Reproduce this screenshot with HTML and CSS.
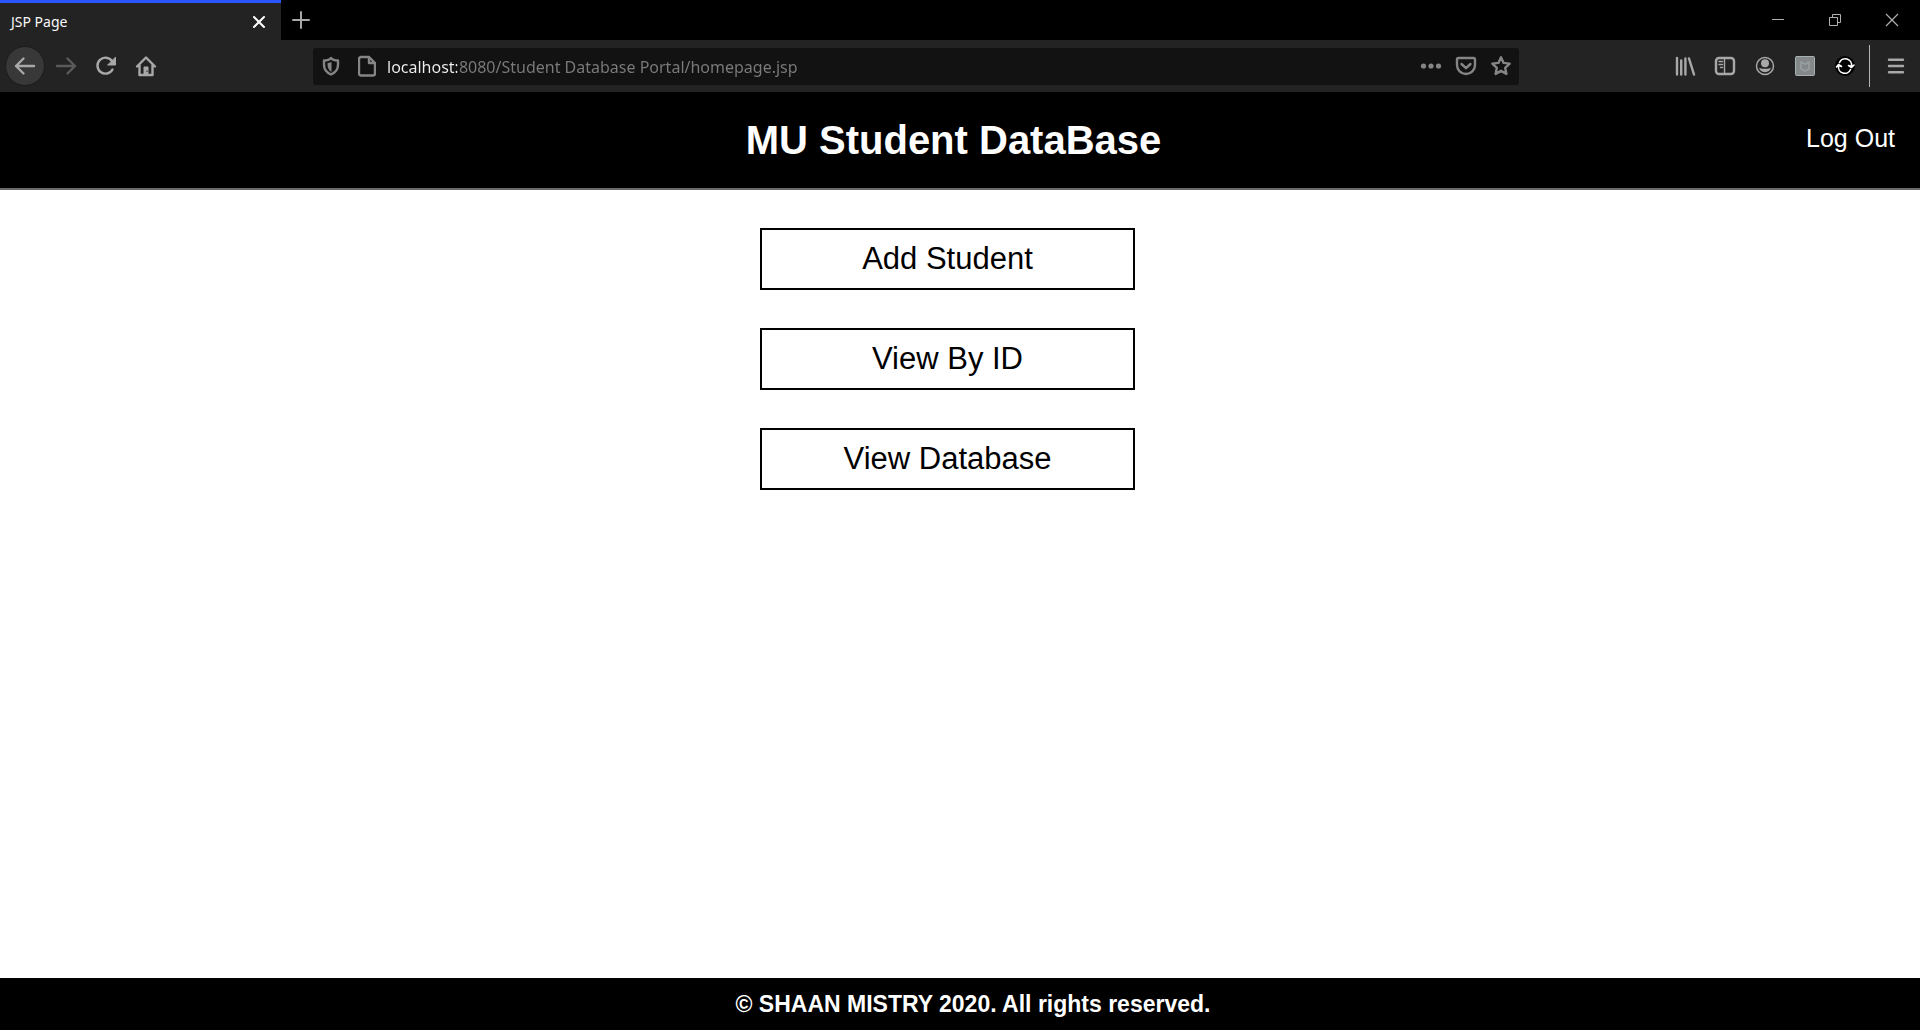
FILE: index.html
```html
<!DOCTYPE html>
<html lang="en">
<head>
<meta charset="utf-8">
<title>JSP Page</title>
<link rel="stylesheet" href="styles.css">
</head>
<body>
<div class="browser">
  <div class="tabstrip">
    <div class="tab">
      <span class="tab-label">JSP Page</span>
      <button class="tab-close" aria-label="Close tab"><svg width="14" height="14" viewBox="0 0 14 14"><path d="M2 2l10 10M12 2L2 12" stroke="#fff" stroke-width="2" stroke-linecap="round"/></svg></button>
    </div>
    <button class="new-tab" aria-label="New tab"><svg width="18" height="18" viewBox="0 0 18 18"><path d="M9 1v16M1 9h16" stroke="#a8a8a8" stroke-width="2" stroke-linecap="round"/></svg></button>
    <div class="window-controls">
      <button class="window-button" aria-label="Minimize"><svg width="14" height="14" viewBox="0 0 14 14"><path d="M1 6.500h12" stroke="#b0b0b0"/></svg></button>
      <button class="window-button" aria-label="Restore"><svg width="14" height="14" viewBox="0 0 14 14"><path d="M1.500 4.500h8v8h-8zM4.500 4v-2.500h8v8H10" stroke="#b0b0b0"/></svg></button>
      <button class="window-button" aria-label="Close"><svg width="14" height="14" viewBox="0 0 14 14"><path d="M1 1l12 12M13 1L1 13" stroke="#b0b0b0" stroke-width="1.200"/></svg></button>
    </div>
  </div>
  <div class="toolbar">
    <button class="tool tool-back" aria-label="Back"><svg width="22" height="22" viewBox="0 0 22 22"><path d="M20 11H2M9.500 3.500L2 11l7.500 7.500" /></svg></button>
    <button class="tool tool-forward" aria-label="Forward"><svg width="22" height="22" viewBox="0 0 22 22"><path d="M2 11h18M12.500 3.500L20 11l-7.500 7.500"/></svg></button>
    <button class="tool" aria-label="Reload"><svg width="22" height="22" viewBox="0 0 22 22"><path d="M17.500 14.500A8 8 0 1 1 17 6"/><path d="M20.500 2.500v7.500h-7.500z" fill="#a8a8a8" stroke-width="1"/></svg></button>
    <button class="tool" aria-label="Home"><svg width="22" height="22" viewBox="0 0 22 22"><path d="M2 11.500L11 2.500l9 9M4.500 10v10h13V10"/><path d="M9 19.500v-7.500h4v7.500z" fill="#a8a8a8" stroke-width="1"/><path d="M11.500 15.500h1v1.500h-1z" fill="#232323" stroke="none"/></svg></button>
    <div class="urlbar">
      <svg width="18" height="20" viewBox="0 0 18 20"><path d="M2 4.500c3 0 5.500-.6 7-2.500 1.500 1.900 4 2.500 7 2.500v4.500c0 4-2.500 7.500-7 9.500-4.500-2-7-5.500-7-9.500z"/><path d="M9.500 6v10C6.600 14 5.500 12 5.500 7.300z" fill="#858585" stroke="none"/></svg>
      <svg class="page-icon" width="18" height="22" viewBox="0 0 18 22"><path d="M3.500 2H11l6 6v10.500a2 2 0 0 1-2 2H3a2 2 0 0 1-2-2V4a2 2 0 0 1 2-2zM11 2v6h6"/></svg>
      <input class="address" type="text" aria-label="Address" value="localhost:8080/Student Database Portal/homepage.jsp" spellcheck="false">
      <button class="url-action" aria-label="Page actions"><svg width="22" height="22" viewBox="0 0 22 22"><g fill="#858585" stroke="none"><circle cx="3.500" cy="11" r="2.600"/><circle cx="11" cy="11" r="2.600"/><circle cx="18.500" cy="11" r="2.600"/></g></svg></button>
      <button class="url-action" aria-label="Save to Pocket"><svg width="22" height="22" viewBox="0 0 22 22"><path d="M3.500 3h15a1.500 1.500 0 0 1 1.500 1.500V10a9 9 0 0 1-18 0V4.500A1.500 1.500 0 0 1 3.500 3z"/><path d="M6.500 9l4.500 4.200L15.500 9" stroke-width="2.400"/></svg></button>
      <button class="url-action" aria-label="Bookmark"><svg width="22" height="22" viewBox="0 0 22 22"><path d="M11 2.300l2.600 5.600 6.100.7-4.500 4.200 1.200 6.100-5.400-3-5.400 3 1.200-6.100-4.500-4.200 6.100-.7z"/></svg></button>
    </div>
    <div class="tools-right">
      <button class="tool" aria-label="Library"><svg width="22" height="22" viewBox="0 0 22 22"><path d="M3 3v16.500M7.200 5.500v14M11.400 3.500v16M15 3.500l5 16"/></svg></button>
      <button class="tool" aria-label="Sidebars"><svg width="22" height="22" viewBox="0 0 22 22"><rect x="2" y="3" width="18" height="16" rx="3"/><path d="M10.500 3v16M5 6.500h3.500M5 9.500h3.500M6.500 12.500h2" stroke-width="1.400"/></svg></button>
      <button class="tool" aria-label="Account"><svg width="22" height="22" viewBox="0 0 22 22"><circle cx="11" cy="11" r="8.500" stroke-width="1.500"/><circle cx="11" cy="8.300" r="4" fill="#a8a8a8" stroke="none"/><path d="M5 12.800c1.700.8 3 1 4 1h4c1 0 2.300-.2 4-1-.7 2.700-3 4.400-6 4.400s-5.300-1.700-6-4.400z" fill="#a8a8a8" stroke="none"/></svg></button>
      <button class="tool" aria-label="WebAdvisor"><svg width="22" height="22" viewBox="0 0 22 22"><rect x="1.500" y="1.500" width="19" height="19" rx="1" fill="#858889" stroke="#a6b0b3" stroke-width="1"/><path d="M7 7l4 2.300L15 7v7l-4 2-4-2z" stroke="#979ea0" stroke-width="1.800"/></svg></button>
      <button class="tool" aria-label="Sync"><svg width="22" height="22" viewBox="0 0 22 22"><circle cx="11" cy="11" r="10" fill="#000" stroke="none"/><g stroke="#fff" stroke-width="1.600"><path d="M5.500 7.500a6.300 6.300 0 0 1 12 3.500M16.500 14.500a6.300 6.300 0 0 1-12-3.500"/><path d="M2.500 12l2-2.500 3 2M14.500 10.500l3 2 2.500-2.500" fill="#fff"/></g></svg></button>
      <span class="separator"></span>
      <button class="tool" aria-label="Menu"><svg width="22" height="22" viewBox="0 0 22 22"><path d="M4 4.700h14M4 11h14M4 17.300h14"/></svg></button>
    </div>
  </div>
</div>
<header class="site-header">
  <h1 class="site-title">MU Student DataBase</h1>
  <a class="logout" href="#">Log Out</a>
</header>
<main class="menu">
  <button class="menu-button">Add Student</button>
  <button class="menu-button">View By ID</button>
  <button class="menu-button">View Database</button>
</main>
<footer class="site-footer">© SHAAN MISTRY 2020. All rights reserved.</footer>
</body>
</html>
```
FILE: styles.css
```css
* {
  box-sizing: border-box;
}

body {
  margin: 0;
  min-height: 100vh;
  display: flex;
  flex-direction: column;
  background: #fff;
  font-family: "Liberation Sans", Arial, sans-serif;
}

button {
  margin: 0;
  padding: 0;
  border: 0;
  background: none;
  font: inherit;
  color: inherit;
}

svg {
  display: block;
  flex: none;
  fill: none;
}

/* Browser window */
.browser {
  font-family: "Noto Sans", "Open Sans", sans-serif;
}

.tabstrip {
  display: flex;
  height: 40px;
  background: #000;
}

.tab {
  display: flex;
  align-items: center;
  justify-content: space-between;
  width: 281px;
  padding: 0 13px 0 11px;
  border-top: 3px solid #2b55ff;
  background: #232323;
  color: #f9f9fa;
  font-size: 14px;
}

.tab-close {
  padding: 2px;
}

.new-tab {
  display: grid;
  place-items: center;
  width: 40px;
}

.window-controls {
  display: flex;
  margin-left: auto;
}

.window-button {
  display: grid;
  place-items: center;
  width: 57px;
}

.toolbar {
  display: flex;
  align-items: center;
  height: 52px;
  padding: 0 4px 0 5px;
  background: #232323;
}

.tool {
  display: grid;
  place-items: center;
  flex: none;
  width: 40px;
  height: 40px;
}

.tool svg {
  stroke: #a8a8a8;
  stroke-width: 2.4;
  stroke-linecap: round;
  stroke-linejoin: round;
}

.tool-back {
  margin-right: 1px;
  border: 1px solid #1b1b1b;
  border-radius: 50%;
  background: #383838;
}

.tool-forward svg {
  stroke: #5a5a5a;
}

.urlbar {
  display: flex;
  align-items: center;
  flex: 1;
  height: 37px;
  margin: 0 146px 0 147px;
  padding: 0 1px 0 9px;
  border-radius: 3px;
  background: #121212;
}

.urlbar svg {
  stroke: #858585;
  stroke-width: 2.4;
  stroke-linejoin: round;
  stroke-linecap: round;
}

.page-icon {
  margin-left: 18px;
}

/* The host part of the address is brighter than the path */
.address {
  flex: 1;
  min-width: 0;
  margin-left: 11px;
  padding: 2px 0 0;
  border: 0;
  outline: 0;
  font-family: inherit;
  font-size: 16px;
  line-height: 24px;
  color: transparent;
  background: linear-gradient(90deg, #f0f0f0 70px, #7b7b7b 70px);
  -webkit-background-clip: text;
  background-clip: text;
}

.url-action {
  display: grid;
  place-items: center;
  width: 35px;
  height: 37px;
}

.tools-right {
  display: flex;
  align-items: center;
}

.separator {
  width: 1px;
  height: 42px;
  margin: 0 6px 0 4px;
  background: #b5b5b5;
}

/* Page */
.site-header {
  display: grid;
  grid-template-columns: 1fr auto 1fr;
  align-items: center;
  height: 98px;
  padding: 0 25px 0 12px;
  border-bottom: 2px solid #696969;
  background: #000;
  color: #fff;
}

.site-title {
  grid-column: 2;
  margin: 0;
  font-size: 40px;
  line-height: 48px;
}

.logout {
  justify-self: end;
  padding-bottom: 4px;
  color: #fff;
  font-size: 25px;
  line-height: 30px;
  text-decoration: none;
}

.menu {
  flex: 1;
  display: flex;
  flex-direction: column;
  align-items: center;
  gap: 38px;
  padding: 38px 25px 38px 0;
}

.menu-button {
  width: 375px;
  height: 62px;
  border: 2px solid #000;
  background: #fff;
  color: #000;
  font-size: 31px;
}

.site-footer {
  padding: 12px 0 12px 26px;
  background: #000;
  color: #fff;
  font-size: 23px;
  font-weight: bold;
  line-height: 28px;
  text-align: center;
}
```
